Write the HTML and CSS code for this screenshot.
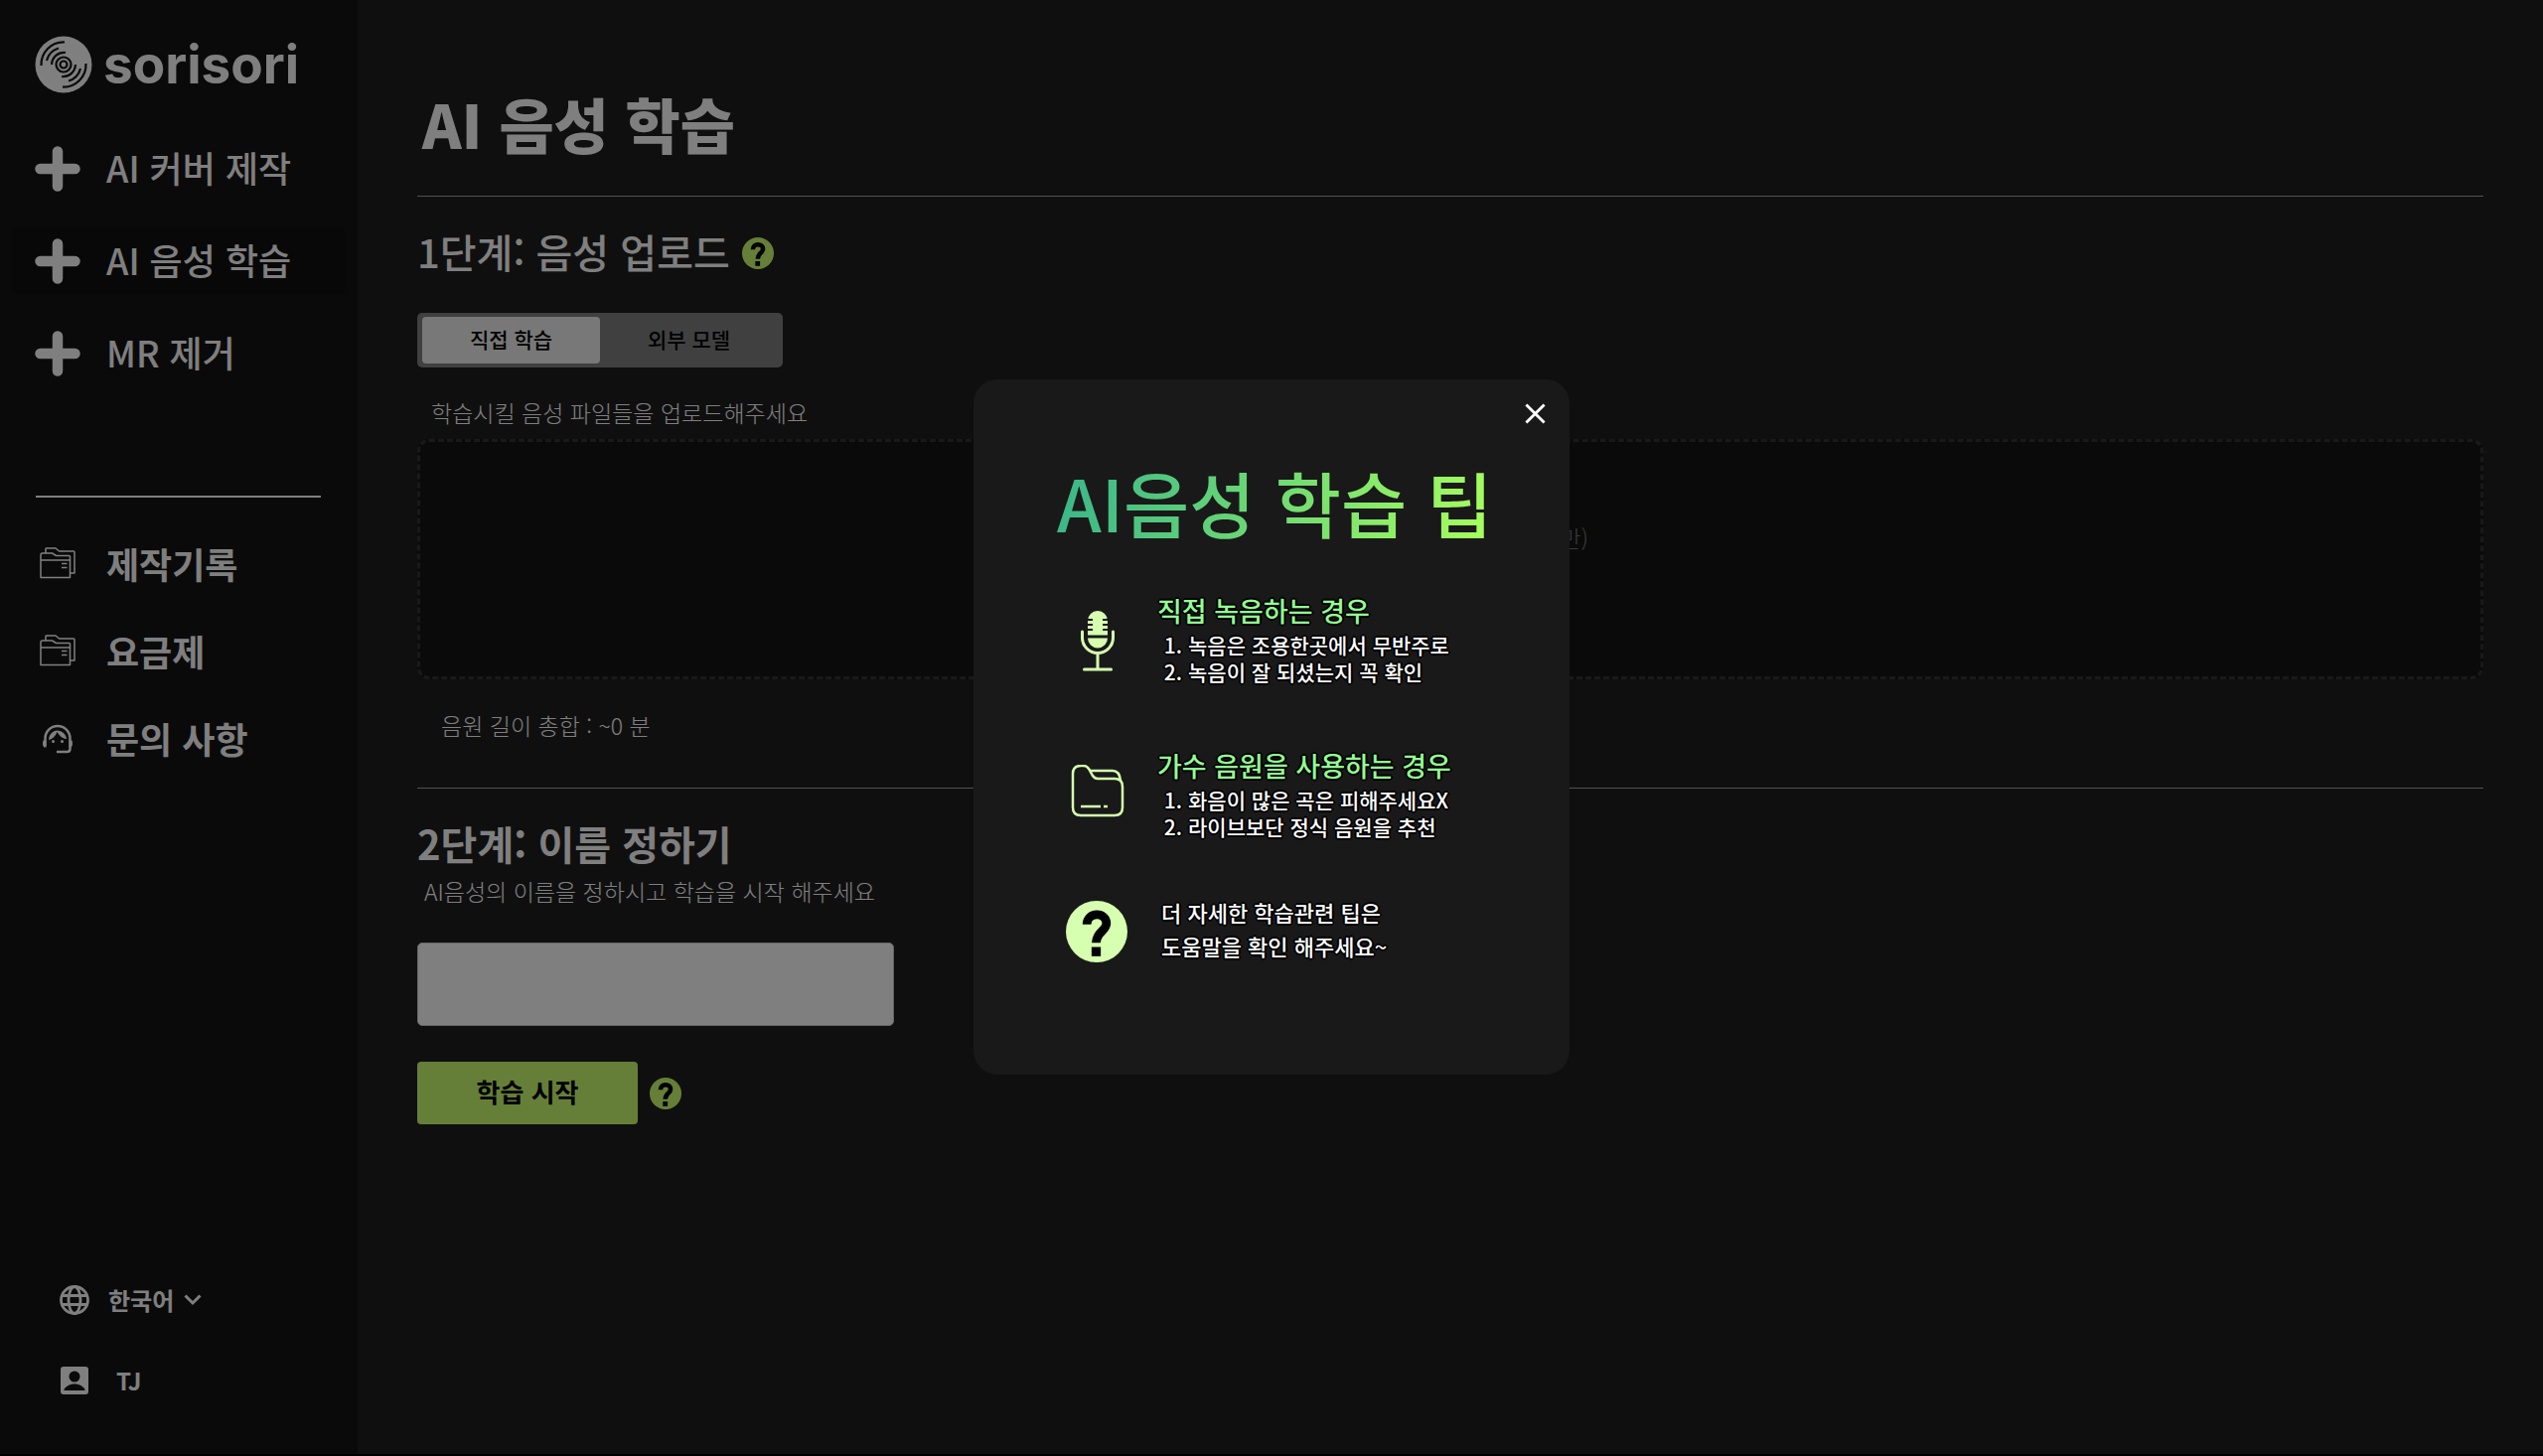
FILE: index.html
```html
<!DOCTYPE html>
<html lang="ko">
<head>
  <meta charset="UTF-8" />
  <meta name="viewport" content="width=device-width, initial-scale=1.0"/>
  <title>sorisori - AI 음성 학습</title>
  <link rel="stylesheet" href="styles.css">
</head>
<body>

  <!-- 공용 아이콘 -->
  <svg class="sprite" aria-hidden="true">
    <symbol id="icon-plus" viewBox="0 0 46 46">
      <path d="M23 5.500V40.500M5.500 23H40.500" stroke="currentColor" stroke-width="10.500" stroke-linecap="round"/>
    </symbol>
    <symbol id="icon-files" viewBox="0 0 36 32">
      <g fill="none" stroke="currentColor" stroke-width="1.500" stroke-linejoin="round">
        <path d="M1 8V30.500H30.500V9.500Q30.500 8.500 29.500 8.500H16.500L12.500 6H2.500Q1 6 1 8ZM1 13H30.500"/>
        <path d="M6 6V1.500Q6 1 7 1H16L19.500 4H34Q35 4 35 5V26H31"/>
        <path d="M22 16.500H27.500M22 20.500H27.500"/>
      </g>
    </symbol>
    <symbol id="icon-help" viewBox="0 0 60 60">
      <circle cx="30" cy="30" r="30" fill="currentColor"/>
      <path d="M20.500 23C20.500 10.500 39.500 10.500 39.500 22C39.500 29.500 29.500 30 29.500 41" fill="none" stroke="#000" stroke-width="8.500"/>
      <path d="M25 45h9v9h-9z" fill="#000"/>
    </symbol>
  </svg>

  <div class="layout">
    <aside class="sidebar">
      <a class="logo" href="#">
        <svg viewBox="0 0 58 58" aria-hidden="true">
          <circle cx="29" cy="29" r="28.500" fill="currentColor"/>
          <g fill="none" stroke="#141414" stroke-width="2.200">
            <circle cx="29" cy="29" r="3.500"/>
            <circle cx="29" cy="29" r="7.500"/>
            <path d="M6.500 30A22.500 22.500 0 0 1 30 6.500M12 25A17.500 17.500 0 0 1 24 12.500M17 29A12.500 12.500 0 0 1 31 17M51.500 28A22.500 22.500 0 0 1 28 51.500M46 33A17.500 17.500 0 0 1 34 45.500M41 29A12.500 12.500 0 0 1 27 41"/>
          </g>
        </svg>
        <span>sorisori</span>
      </a>

      <nav class="menu menu-main">
        <a href="#"><svg class="icon-plus"><use href="#icon-plus"/></svg>AI 커버 제작</a>
        <a href="#" class="active"><svg class="icon-plus"><use href="#icon-plus"/></svg>AI 음성 학습</a>
        <a href="#"><svg class="icon-plus"><use href="#icon-plus"/></svg>MR 제거</a>
      </nav>

      <hr class="menu-line">

      <nav class="menu menu-sub">
        <a href="#"><svg class="icon-sub"><use href="#icon-files"/></svg>제작기록</a>
        <a href="#"><svg class="icon-sub"><use href="#icon-files"/></svg>요금제</a>
        <a href="#">
          <svg class="icon-sub" viewBox="0 -2 36 32" aria-hidden="true">
            <path d="M5.500 22V14.500A12.500 12.500 0 0 1 30.500 14.500V25Q30.500 28 27.500 28H17" fill="none" stroke="currentColor" stroke-width="2.500"/>
            <path d="M3.500 16.500h3v7h-2q-1.500-1-1.500-3.500t.5-3.500zM32.500 16.500h-3v7h2q1.500-1 1.500-3.500t-.5-3.500z" fill="currentColor"/>
            <path d="M9 16C9.500 10 13 7 17.500 6.500C22.500 7 26.500 10 27 15C22.500 14.500 19.500 11.500 17.500 8C16 12 13 15 9 16Z" fill="currentColor"/>
            <circle cx="13.500" cy="17.500" r="1.500" fill="currentColor"/>
            <circle cx="22.500" cy="17.500" r="1.500" fill="currentColor"/>
          </svg>문의 사항
        </a>
      </nav>

      <div class="sidebar-bottom">
        <button type="button" class="bottom-item">
          <svg class="icon-bottom" viewBox="0 0 30 30" fill="none" stroke="currentColor" stroke-width="2.800" aria-hidden="true">
            <circle cx="15" cy="15" r="13.500"/>
            <ellipse cx="15" cy="15" rx="6" ry="13.500"/>
            <path d="M2.500 10.500H27.500M2.500 19.500H27.500"/>
          </svg>
          <span>한국어</span>
          <svg class="icon-arrow" viewBox="0 0 18 12" fill="none" stroke="currentColor" stroke-width="3" aria-hidden="true"><path d="M1.500 1.500L9 9L16.500 1.500"/></svg>
        </button>
        <a href="#" class="bottom-item user">
          <svg class="icon-bottom" viewBox="0 0 30 30" aria-hidden="true">
            <rect x="1" y="1" width="28" height="28" rx="3" fill="currentColor"/>
            <circle cx="15" cy="11" r="5.500" fill="#141414"/>
            <path d="M4.500 25V24C7 20 11 18.500 15 18.500S23 20 25.500 24V25Z" fill="#141414"/>
          </svg>
          <span>TJ</span>
        </a>
      </div>
    </aside>

    <main class="content">
      <h1>AI 음성 학습</h1>

      <section class="step">
        <h2>1단계: 음성 업로드 <button type="button" class="help" aria-label="도움말"><svg><use href="#icon-help"/></svg></button></h2>

        <div class="tabs">
          <button type="button" class="tab on">직접 학습</button>
          <button type="button" class="tab">외부 모델</button>
        </div>

        <p class="desc upload-desc">학습시킬 음성 파일들을 업로드해주세요</p>
        <button type="button" class="dropzone">파일을 업로드 (MP3, WAV만)</button>
        <p class="desc total">음원 길이 총합 : ~0 분</p>
      </section>

      <section class="step step-name">
        <h2>2단계: 이름 정하기</h2>
        <label class="desc name-desc" for="voice-name">AI음성의 이름을 정하시고 학습을 시작 해주세요</label>
        <input type="text" id="voice-name" class="name-input">
        <div class="start-row">
          <button type="button" class="start">학습 시작</button>
          <button type="button" class="help" aria-label="도움말"><svg><use href="#icon-help"/></svg></button>
        </div>
      </section>
    </main>
  </div>

  <div class="overlay">
    <div class="modal" role="dialog" aria-modal="true" aria-labelledby="tip-title">
      <button type="button" class="close" aria-label="닫기">
        <svg viewBox="0 0 22 22" stroke="currentColor" stroke-width="3"><path d="M1.500 1.500L20.500 20.500M20.500 1.500L1.500 20.500"/></svg>
      </button>
      <h2 id="tip-title" class="tip-title">AI음성 학습 팁</h2>

      <div class="tip">
        <svg class="tip-icon" viewBox="-1 0 62 62" fill="none" stroke="currentColor" aria-hidden="true">
          <path d="M21 25.500V11A10 10 0 0 1 41 11V25.500ZM21 28.500H41A10 10 0 0 1 21 28.500Z" fill="currentColor" stroke="none"/>
          <path d="M20 10h6M20 15h6M20 20h6M36 10h6M36 15h6M36 20h6" stroke="#191919" stroke-width="2"/>
          <path d="M15.500 22V28A15.500 15.500 0 0 0 46.500 28V22M31 44V60M17.500 60H44.500" stroke-width="3" stroke-linecap="round"/>
        </svg>
        <div class="tip-text">
          <h3>직접 녹음하는 경우</h3>
          <ol>
            <li>녹음은 조용한곳에서 무반주로</li>
            <li>녹음이 잘 되셨는지 꼭 확인</li>
          </ol>
        </div>
      </div>

      <div class="tip">
        <svg class="tip-icon" viewBox="-1 5 62 62" fill="none" stroke="currentColor" stroke-width="2.500" aria-hidden="true">
          <path d="M6 14Q6 6 14 6H17Q20 6 22 9L26 16Q28 19 31 19H48Q56 19 56 27V48Q56 56 48 56H14Q6 56 6 48Z"/>
          <path d="M23 11H46Q53 11 54 21"/>
          <path d="M14 47H34M37 47H41"/>
        </svg>
        <div class="tip-text">
          <h3>가수 음원을 사용하는 경우</h3>
          <ol>
            <li>화음이 많은 곡은 피해주세요X</li>
            <li>라이브보단 정식 음원을 추천</li>
          </ol>
        </div>
      </div>

      <div class="tip tip-more">
        <svg class="tip-icon" aria-hidden="true"><use href="#icon-help"/></svg>
        <p class="tip-text">더 자세한 학습관련 팁은<br>도움말을 확인 해주세요~</p>
      </div>
    </div>
  </div>

  <script>
    const overlay = document.querySelector(".overlay");
    const tabs = document.querySelectorAll(".tab");

    // 팁 창 열기/닫기
    document.querySelector(".close").addEventListener("click", () => {
      overlay.classList.add("hidden");
    });

    document.querySelectorAll(".help").forEach(btn => {
      btn.addEventListener("click", () => overlay.classList.remove("hidden"));
    });

    tabs.forEach(tab => {
      tab.addEventListener("click", () => {
        tabs.forEach(t => t.classList.remove("on"));
        tab.classList.add("on");
      });
    });
  </script>

</body>
</html>
```
FILE: styles.css
```css
* { box-sizing: border-box; margin: 0; padding: 0; }

html { background-color: #000; }

body {
  font-family: 'Noto Sans CJK KR', 'Noto Sans', sans-serif;
  color: white;
}

button, input {
  font: inherit;
  color: inherit;
  border: none;
  background: none;
}

button { cursor: pointer; }
a { color: inherit; text-decoration: none; }
svg { display: block; flex-shrink: 0; }
.sprite { display: none; }

.layout {
  display: flex;
  min-height: calc(100vh - 2px);
  background-color: #1e1e1e;
}

/* 사이드바 */
.sidebar {
  display: flex;
  flex-direction: column;
  width: 360px;
  flex-shrink: 0;
  padding: 34px 12px 54px;
  background-color: #141414;
}

.logo {
  display: flex;
  align-items: center;
  gap: 11px;
  padding-left: 23px;
  font-family: Inter, sans-serif;
  font-size: 53px;
  font-weight: 700;
  line-height: 62px;
}

.logo svg { width: 58px; height: 58px; }

.menu {
  display: flex;
  flex-direction: column;
}

.menu a {
  display: flex;
  align-items: center;
  height: 68px;
  padding: 0 0 4px 23px;
  border-radius: 8px;
  font-size: 36px;
  font-weight: 500;
}

.menu-main { gap: 25px; margin-top: 40px; }
.menu-main .active { background-color: #111; }
.icon-plus { width: 46px; height: 46px; margin: 4px 26px 0 0; }

.menu-line {
  height: 2px;
  margin: 109px 25px 34px 24px;
  border: none;
  background-color: white;
}

.menu-sub { gap: 20px; }
.menu-sub a { font-weight: 700; }
.icon-sub { width: 36px; height: 32px; margin: 0 31px 0 5px; }

.sidebar-bottom {
  display: flex;
  flex-direction: column;
  gap: 41px;
  margin-top: auto;
  padding-left: 48px;
}

.bottom-item {
  display: flex;
  align-items: center;
  height: 40px;
  font-size: 24px;
  font-weight: 700;
}

.bottom-item span { padding-bottom: 2px; }
.icon-bottom { width: 30px; height: 30px; margin-right: 19px; }
.icon-arrow { width: 18px; height: 12px; margin-left: 10px; }
.user .icon-bottom { margin-right: 27px; }

/* 본문 */
.content {
  flex: 1;
  padding: 79px 60px 40px;
}

h1 {
  padding: 0 5px 29px;
  font-size: 60px;
  font-weight: 900;
  line-height: 89px;
}

.step {
  padding-top: 25px;
  border-top: 1px solid #a0a0a0;
}

.step h2 {
  display: flex;
  align-items: center;
  gap: 12px;
  font-size: 40px;
  font-weight: 500;
  line-height: 60px;
}

.step-name h2 { font-weight: 700; }

.help svg { width: 32px; height: 32px; color: #cdff70; }
h2 .help { padding-top: 4px; }

.tabs {
  display: flex;
  width: 368px;
  height: 55px;
  margin-top: 32px;
  padding: 4px 5px;
  border-radius: 5px;
  background-color: #808080;
}

.tab {
  flex: 1;
  padding-bottom: 4px;
  border-radius: 4px;
  color: black;
  font-size: 21px;
  font-weight: 500;
}

.tab.on { background-color: #f0f0f0; }

.desc {
  font-size: 23px;
  font-weight: 300;
  line-height: 36px;
}

.upload-desc { padding-left: 14px; margin-top: 27px; }

.dropzone {
  width: 100%;
  height: 242px;
  margin-top: 9px;
  padding-bottom: 44px;
  border: 3px dashed #333;
  border-radius: 12px;
  background-color: #141414;
  color: #777;
  font-size: 23px;
  font-weight: 300;
}

.total { padding: 0 24px; margin: 28px 0 45px; }
.name-desc { display: block; padding-left: 7px; }

.name-input {
  display: block;
  width: 480px;
  height: 84px;
  margin-top: 34px;
  padding: 0 20px;
  border: 1px solid #ccc;
  border-radius: 5px;
  background-color: white;
  color: black;
  font-size: 23px;
}

.start-row {
  display: flex;
  align-items: center;
  gap: 12px;
  margin-top: 36px;
}

.start {
  width: 222px;
  height: 63px;
  padding-bottom: 4px;
  border-radius: 4px;
  background-color: #cdff70;
  color: black;
  font-size: 26px;
  font-weight: 700;
}

/* 학습 팁 */
.overlay {
  position: fixed;
  inset: 0 0 2px;
  display: flex;
  align-items: center;
  justify-content: center;
  background-color: rgba(0,0,0,0.5);
}

.overlay.hidden { display: none; }

.modal {
  position: relative;
  width: 600px;
  height: 700px;
  padding: 69px 24px 0 93px;
  border-radius: 24px;
  background-color: #191919;
}

.close {
  position: absolute;
  top: 24px;
  right: 24px;
}

.close svg { width: 21px; height: 21px; }

.tip-title {
  width: fit-content;
  margin: 0 0 37px -9px;
  background: linear-gradient(100deg, #38b58a, #a8ff5c);
  -webkit-background-clip: text;
  background-clip: text;
  color: transparent;
  font-size: 72px;
  font-weight: 500;
  line-height: 107px;
}

.tip {
  display: flex;
  align-items: center;
  gap: 30px;
  height: 100px;
  margin-bottom: 56px;
  text-shadow: 2px 0 #000, -2px 0 #000, 0 2px #000, 0 -2px #000, 1px 1px #000, -1px -1px #000, 1px -1px #000, -1px 1px #000;
}

.tip-more { height: 62px; }
.tip-icon { width: 62px; height: 62px; color: #d6ffb0; }
.tip-text { padding-bottom: 6px; }

.tip h3 {
  color: #93ff93;
  font-size: 27px;
  font-weight: 500;
  line-height: 42px;
}

.tip ol { padding-left: 31px; }

.tip li {
  font-size: 21px;
  font-weight: 500;
  line-height: 27px;
}

.tip p {
  padding-left: 4px;
  font-size: 22px;
  font-weight: 500;
  line-height: 34px;
}
```
